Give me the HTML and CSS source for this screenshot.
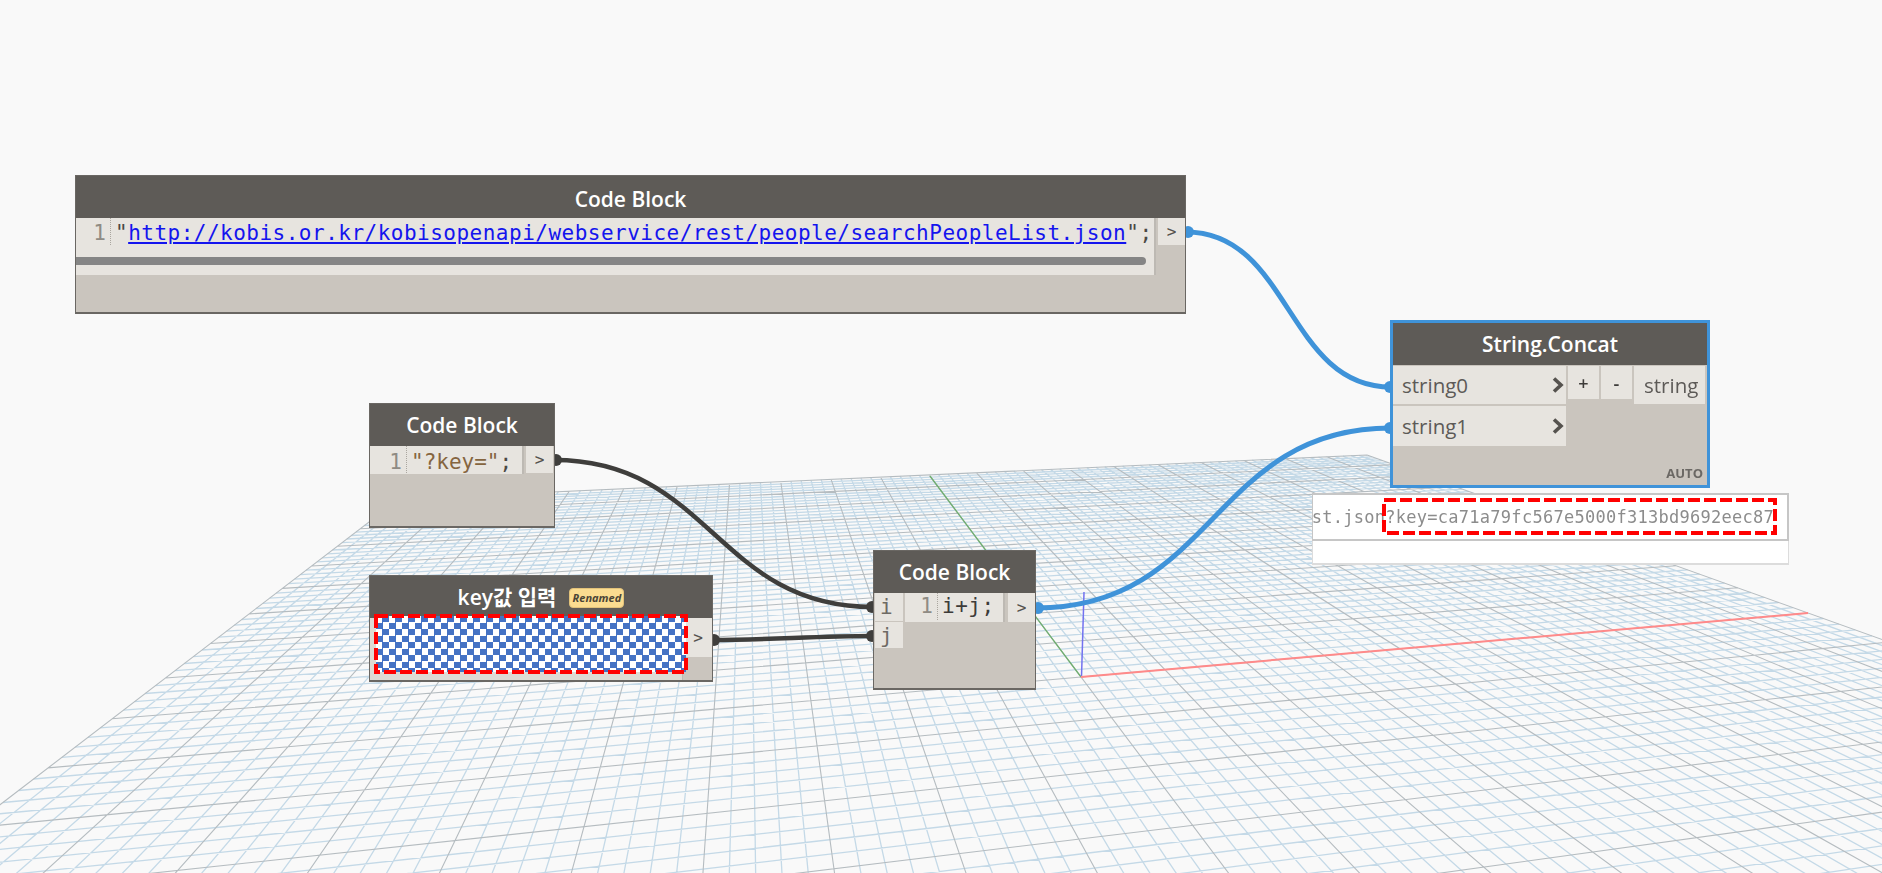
FILE: index.html
```html
<!DOCTYPE html>
<html lang="en">
<head>
    <meta charset="UTF-8">
    <link rel="stylesheet" href="styles.css">
    <title>Dynamo graph</title>
</head>
<body>

<div class="canvas">

    <svg class="layer" id="grid" width="1882" height="873"></svg>

    <svg class="layer" width="1882" height="873">
        <path class="wire wire-dark" d="M554 460 C710 460 717 607 873 607"/>
        <path class="wire wire-dark" d="M712 640 C770 640 815 636 873 636"/>
        <path class="wire wire-blue" d="M1186 232 C1290 232 1287 387 1391 387"/>
        <path class="wire wire-blue" d="M1036 608 C1215 608 1212 428 1391 428"/>
        <circle class="dot-dark" cx="556" cy="460" r="6"/>
        <circle class="dot-dark" cx="714" cy="640" r="6"/>
        <circle class="dot-dark" cx="872" cy="607" r="6"/>
        <circle class="dot-dark" cx="872" cy="636" r="6"/>
        <circle class="dot-blue" cx="1188" cy="232" r="6"/>
        <circle class="dot-blue" cx="1038" cy="608" r="6"/>
        <circle class="dot-blue" cx="1390" cy="387" r="6"/>
        <circle class="dot-blue" cx="1390" cy="428" r="6"/>
    </svg>

    <!-- url block -->
    <div class="node node-url">
        <div class="node-title">Code Block</div>
        <div class="node-body">
            <div class="editor editor-url">
                <div class="code-line">
                    <span class="line-no no-url">1</span>
                    <span class="code code-string"><span class="code-dark">"</span><a class="code-link">http://kobis.or.kr/kobisopenapi/webservice/rest/people/searchPeopleList.json</a><span class="code-dark">"</span><span class="code-dark">;</span></span>
                </div>
                <div class="scrollbar"></div>
            </div>
            <div class="port port-out">&gt;</div>
        </div>
    </div>

    <!-- key string -->
    <div class="node node-key-code">
        <div class="node-title">Code Block</div>
        <div class="node-body">
            <div class="editor editor-key">
                <div class="code-line">
                    <span class="line-no no-key">1</span>
                    <span class="code code-string">"?key="<span class="code-dark">;</span></span>
                </div>
            </div>
            <div class="port port-out">&gt;</div>
        </div>
    </div>

    <!-- renamed input -->
    <div class="node node-key-input">
        <div class="node-title">
            <span class="title-cjk">key값 입력</span>
            <span class="badge">Renamed</span>
        </div>
        <div class="node-body">
            <div class="key-field"></div>
            <div class="port port-key">&gt;</div>
        </div>
    </div>

    <!-- i+j -->
    <div class="node node-join">
        <div class="node-title">Code Block</div>
        <div class="node-body">
            <div class="join-inputs">
                <div class="port-in code">i</div>
                <div class="port-in code">j</div>
            </div>
            <div class="editor editor-join">
                <div class="code-line">
                    <span class="line-no no-join">1</span>
                    <span class="code">i+j;</span>
                </div>
            </div>
            <div class="port port-out port-join">&gt;</div>
        </div>
    </div>

    <!-- concat -->
    <div class="node node-concat">
        <div class="node-title">String.Concat</div>
        <div class="node-body">
            <div class="concat-inputs">
                <div class="concat-in">
                    <span>string0</span>
                    <svg class="chevron" width="12" height="16"><path d="M2 1.5 L9 8 L2 14.5"/></svg>
                </div>
                <div class="concat-in concat-in-last">
                    <span>string1</span>
                    <svg class="chevron" width="12" height="16"><path d="M2 1.5 L9 8 L2 14.5"/></svg>
                </div>
            </div>
            <div class="concat-btn">+</div>
            <div class="concat-btn">-</div>
            <div class="concat-out">string</div>
        </div>
        <div class="lacing">AUTO</div>
    </div>

    <!-- preview -->
    <div class="preview">
        <div class="preview-value"><span class="preview-text">st.json?key=ca71a79fc567e5000f313bd9692eec87</span></div>
        <div class="preview-empty"></div>
    </div>

    <div class="checker"></div>

    <svg class="mark mark-key" width="314" height="60"><rect x="2" y="2" width="310" height="56"/></svg>
    <svg class="mark mark-preview" width="395" height="37"><rect x="2" y="2" width="391" height="33"/></svg>

</div>

<script src="grid.js"></script>
</body>
</html>
```

FILE: styles.css
```css
body {
    margin: 0;
    background-color: #f9f9f9;
    overflow: hidden;
}

.canvas {
    position: relative;
    width: 1882px;
    height: 873px;
    overflow: hidden;
    filter: blur(0.35px);
    font-family: "Open Sans", "Noto Sans", sans-serif;
}

.layer {
    position: absolute;
    left: 0;
    top: 0;
}

/* grid */
.grid-minor {
    fill: none;
    stroke: #c4d9e7;
    stroke-width: 1.3;
}

.grid-major {
    fill: none;
    stroke: #b5bcc0;
    stroke-width: 1.1;
}

.axis-x {
    stroke: #ff8a8a;
    stroke-width: 2;
}

.axis-y {
    stroke: #6fae6f;
    stroke-width: 1.3;
}

.axis-z {
    stroke: #7272f0;
    stroke-width: 1.5;
}

/* wires */
.wire {
    fill: none;
    stroke-width: 4.5;
}

.wire-dark {
    stroke: #3f3e3c;
}

.wire-blue {
    stroke: #3f93d9;
    stroke-width: 5;
}

.dot-dark {
    fill: #3f3e3c;
}

.dot-blue {
    fill: #3f93d9;
}

/* nodes */
.node {
    position: absolute;
    box-sizing: border-box;
    display: flex;
    flex-direction: column;
    background-color: #cac5be;
    border: 1px solid #6a6763;
    border-bottom-width: 2px;
}

.node-url {
    left: 75px;
    top: 175px;
    width: 1111px;
    height: 139px;
}

.node-key-code {
    left: 369px;
    top: 403px;
    width: 186px;
    height: 125px;
}

.node-key-input {
    left: 369px;
    top: 575px;
    width: 344px;
    height: 107px;
}

.node-join {
    left: 873px;
    top: 550px;
    width: 163px;
    height: 140px;
}

.node-concat {
    left: 1390px;
    top: 320px;
    width: 320px;
    height: 168px;
    border: 3px solid #3f93d9;
}

.node-title {
    box-sizing: border-box;
    flex: none;
    height: 42px;
    display: flex;
    align-items: center;
    justify-content: center;
    gap: 13px;
    background-color: #5e5b57;
    color: #fff;
    font-size: 21px;
    font-weight: 600;
}

.node-url .node-title {
    padding-top: 3px;
}

.title-cjk {
    font-family: "Open Sans", "Noto Sans CJK KR", sans-serif;
    margin-top: -2px;
}

.badge {
    box-sizing: border-box;
    width: 55px;
    height: 20px;
    display: flex;
    align-items: center;
    justify-content: center;
    background-color: #fbdc90;
    border: 1px solid #e2c27a;
    border-radius: 4px;
    color: #4a4436;
    font-size: 11px;
    font-weight: 700;
    font-style: italic;
    margin-top: 1px;
}

.node-body {
    display: flex;
    align-items: flex-start;
    flex: 1;
}

/* code editor */
.editor {
    box-sizing: border-box;
    background-color: #e7e4df;
    border-right: 2px solid #bdb9b3;
}

.editor-url {
    width: 1080px;
    height: 57px;
}

.editor-key {
    width: 154px;
    height: 28px;
}

.editor-join {
    width: 100px;
    height: 29px;
    margin-left: 2px;
}

.code-line {
    display: flex;
    align-items: stretch;
    height: 27px;
}

.line-no {
    box-sizing: border-box;
    flex: none;
    text-align: right;
    padding-right: 4px;
    border-right: 1px dotted #aaa69f;
    color: #8f8b84;
    font-family: "DejaVu Sans Mono", monospace;
    font-size: 21px;
    line-height: 27px;
}

.no-url {
    width: 35px;
}

.no-key {
    width: 37px;
}

.no-join {
    width: 33px;
}

.code {
    padding-left: 4px;
    color: #3d3b39;
    font-family: "DejaVu Sans Mono", monospace;
    font-size: 21px;
    letter-spacing: 0.49px;
    line-height: 27px;
    white-space: nowrap;
}

.editor-url .code,
.editor-url .line-no {
    line-height: 31px;
}

.editor-key .code,
.editor-key .line-no {
    line-height: 33px;
}

.editor-key .code {
    letter-spacing: 0;
}

.code-string {
    color: #85653f;
}

.code-dark {
    color: #4a4844;
}

.code-link {
    color: #1414ee;
    text-decoration: underline;
}

.scrollbar {
    height: 8px;
    margin: 12px 8px 0 0;
    background-color: #858585;
    border-radius: 0 4px 4px 0;
}

/* ports */
.port {
    box-sizing: border-box;
    flex: none;
    display: flex;
    align-items: center;
    justify-content: center;
    width: 27px;
    background-color: #e7e4df;
    color: #55524e;
    font-family: "DejaVu Sans Mono", monospace;
    font-size: 16px;
}

.port-out {
    height: 27px;
    margin-left: 2px;
}

.port-join {
    height: 29px;
    margin-left: 3px;
}

.port-key {
    height: 39px;
    margin-left: auto;
    width: 28px;
}

.key-field {
    box-sizing: border-box;
    width: 313px;
    height: 62px;
    background-color: #dedad4;
    border-right: 1px solid #bdb9b3;
}

.join-inputs {
    display: flex;
    flex-direction: column;
    gap: 1px;
    margin-left: 1px;
}

.port-in {
    box-sizing: border-box;
    width: 28px;
    height: 28px;
    padding-left: 5px;
    background-color: #e7e4df;
    color: #6e6a64;
    line-height: 29px;
}

.node-join .port-in + .port-in {
    height: 26px;
}

/* concat */
.concat-inputs {
    display: flex;
    flex-direction: column;
    gap: 2px;
    width: 173px;
    margin-top: 1px;
}

.concat-in {
    box-sizing: border-box;
    height: 38px;
    display: flex;
    align-items: center;
    justify-content: space-between;
    padding: 0 2px 0 9px;
    background-color: #e7e4df;
    color: #5d5a57;
    font-size: 20.5px;
}

.concat-in-last {
    height: 40px;
}

.chevron {
    flex: none;
}

.chevron path {
    fill: none;
    stroke: #55524e;
    stroke-width: 3.6;
}

.concat-btn {
    width: 31px;
    height: 33px;
    margin: 1px 0 0 2px;
    display: flex;
    align-items: center;
    justify-content: center;
    background-color: #e7e4df;
    color: #3d3b39;
    font-size: 18px;
    font-weight: 600;
}

.concat-out {
    box-sizing: border-box;
    width: 71px;
    height: 38px;
    margin: 1px 0 0 2px;
    padding-left: 10px;
    background-color: #e7e4df;
    color: #5d5a57;
    font-size: 20.5px;
    line-height: 39px;
}

.lacing {
    position: absolute;
    right: 4px;
    bottom: 3px;
    color: #6b6864;
    font-size: 13px;
    font-weight: 700;
}

/* preview bubble */
.preview {
    position: absolute;
    left: 1312px;
    top: 493px;
    width: 477px;
    height: 72px;
    background-color: #fff;
}

.preview-value {
    box-sizing: border-box;
    height: 48px;
    display: flex;
    justify-content: flex-end;
    align-items: center;
    padding-right: 13px;
    border: 2px solid #c6c6c6;
    border-width: 2px 2px 2px 1px;
}

.preview-text {
    flex: none;
    color: #8c8c8c;
    font-family: "DejaVu Sans Mono", monospace;
    font-size: 17px;
    letter-spacing: 0.27px;
}

.preview-empty {
    box-sizing: border-box;
    height: 24px;
    border: 1px solid #dcdcdc;
    border-top: none;
    border-bottom-width: 2px;
}

/* pasted masks over the screenshot */
.checker {
    position: absolute;
    left: 376px;
    top: 616px;
    width: 310px;
    height: 56px;
    background: repeating-conic-gradient(#4472c4 0 25%, #fff 0 50%) 0 0 / 13px 13px;
}

.mark {
    position: absolute;
}

.mark rect {
    fill: none;
    stroke: #ff0000;
    stroke-width: 4;
    stroke-dasharray: 12 4;
}

.mark-key {
    left: 374px;
    top: 614px;
}

.mark-preview {
    left: 1382px;
    top: 498px;
}
```

FILE: grid.js
```js
// perspective floor grid, u and v both run -1..1, origin at the axes
var H = { a: 1041.3, b: 623, c: 1081, d: 42.57, e: 194.2, f: 677, g: 0.17385, h: 0.8344 };

function point(u, v) {
    var w = H.g * u + H.h * v + 1;
    var x = (H.a * u + H.b * v + H.c) / w;
    var y = (H.d * u + H.e * v + H.f) / w;
    return x.toFixed(1) + " " + y.toFixed(1);
}

function seg(u1, v1, u2, v2) {
    return "M" + point(u1, v1) + " L" + point(u2, v2) + " ";
}

var near = -0.7;
var minor = "";
var major = "";

for (var i = -50; i <= 50; i++) {
    var t = i / 50;
    var lines = seg(t, 1, t, near);
    if (t >= near) {
        lines += seg(-1, t, 1, t);
    }
    if (i % 5 === 0) {
        major += lines;
    } else {
        minor += lines;
    }
}

var grid = document.getElementById("grid");

function add(tag, cls, attrs) {
    var el = document.createElementNS("http://www.w3.org/2000/svg", tag);
    el.setAttribute("class", cls);
    for (var k in attrs) {
        el.setAttribute(k, attrs[k]);
    }
    grid.appendChild(el);
}

add("path", "grid-minor", { d: minor });
add("path", "grid-major", { d: major });

// axes
add("line", "axis-y", { x1: 1081, y1: 677, x2: 930, y2: 476 });
add("line", "axis-z", { x1: 1081.5, y1: 677, x2: 1084, y2: 592 });
add("line", "axis-x", { x1: 1081, y1: 677, x2: 1808, y2: 613 });
```
